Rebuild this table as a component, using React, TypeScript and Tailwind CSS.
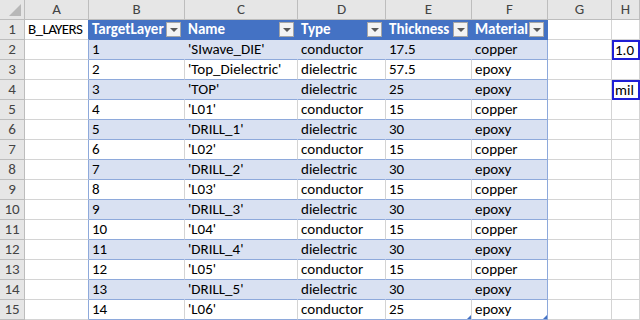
import React from "react";

const rows: [string, string, string, string, string][] = [
  ["1", "'SIwave_DIE'", "conductor", "17.5", "copper"],
  ["2", "'Top_Dielectric'", "dielectric", "57.5", "epoxy"],
  ["3", "'TOP'", "dielectric", "25", "epoxy"],
  ["4", "'L01'", "conductor", "15", "copper"],
  ["5", "'DRILL_1'", "dielectric", "30", "epoxy"],
  ["6", "'L02'", "conductor", "15", "copper"],
  ["7", "'DRILL_2'", "dielectric", "30", "epoxy"],
  ["8", "'L03'", "conductor", "15", "copper"],
  ["9", "'DRILL_3'", "dielectric", "30", "epoxy"],
  ["10", "'L04'", "conductor", "15", "copper"],
  ["11", "'DRILL_4'", "dielectric", "30", "epoxy"],
  ["12", "'L05'", "conductor", "15", "copper"],
  ["13", "'DRILL_5'", "dielectric", "30", "epoxy"],
  ["14", "'L06'", "conductor", "25", "epoxy"],
];

const headers = ["TargetLayer", "Name", "Type", "Thickness", "Material"];
const cols = ["A", "B", "C", "D", "E", "F", "G", "H"];

function Drop() {
  return (
    <div className="absolute right-[3px] top-[2px] w-[15px] h-[15px] bg-[#f3f3f3] border border-[#a6a6a6] flex items-center justify-center">
      <div className="w-0 h-0 border-l-[4px] border-r-[4px] border-t-[4px] border-l-transparent border-r-transparent border-t-[#595959]" />
    </div>
  );
}

export default function App() {
  const font = { fontFamily: "Carlito, Calibri, Lato, 'Liberation Sans', sans-serif" };
  return (
    <div
      className="w-[640px] h-[320px] overflow-hidden bg-white text-[15px] text-black relative"
      style={font}
    >
      <div className="grid grid-cols-[25px_64px_96px_113px_88px_86px_76px_64px_28px] grid-rows-[20px_repeat(15,20px)]">
        {/* corner */}
        <div className="relative bg-[#e6e6e6] border-r border-b border-[#bdbdbd]">
          <div className="absolute right-[3px] bottom-[3px] w-0 h-0 border-b-[12px] border-l-[12px] border-b-[#b8b8b8] border-l-transparent" />
        </div>
        {cols.map((c) => (
          <div
            key={c}
            className="bg-[#e6e6e6] border-r border-b border-[#bdbdbd] flex items-center justify-center text-[#444] leading-none"
          >
            {c}
          </div>
        ))}
        {/* row 1 */}
        <div className="bg-[#e6e6e6] border-r border-b border-[#bdbdbd] flex items-center justify-center text-[#444]">1</div>
        <div className="border-r border-b border-r-[#4472c4] border-b-[#d4d4d4] pl-[3px] flex items-center whitespace-nowrap overflow-hidden tracking-[-0.6px]">B_LAYERS</div>
        {headers.map((h) => (
          <div
            key={h}
            className="relative bg-[#4472c4] border-r border-b border-[#4472c4] pl-[3px] flex items-center text-white font-bold whitespace-nowrap overflow-hidden"
          >
            {h}
            <Drop />
          </div>
        ))}
        <div className="border-r border-b border-[#d4d4d4]" />
        <div className="border-r border-b border-[#d4d4d4]" />
        {rows.map((r, i) => {
          const band = i % 2 === 0;
          const rowNum = i + 2;
          const cellCls = band
            ? "bg-[#d9e1f2] border-r border-b border-r-[#d9e1f2] border-b-[#8ea9db]"
            : "bg-white border-r border-b border-r-[#d4d4d4] border-b-[#8ea9db]";
          const lastCls = band
            ? "bg-[#d9e1f2] border-r border-b border-r-[#8ea9db] border-b-[#8ea9db]"
            : "bg-white border-r border-b border-r-[#8ea9db] border-b-[#8ea9db]";
          const hText = rowNum === 2 ? "1.0" : rowNum === 4 ? "mil" : "";
          return (
            <React.Fragment key={i}>
              <div className="bg-[#e6e6e6] border-r border-b border-[#bdbdbd] flex items-center justify-center text-[#444]">
                {rowNum}
              </div>
              <div className="border-r border-b border-r-[#8ea9db] border-b-[#d4d4d4]" />
              {r.map((v, j) => (
                <div
                  key={j}
                  className={`${j === 4 ? lastCls : cellCls} pl-[3px] flex items-center whitespace-nowrap overflow-hidden relative`}
                >
                  {v}
                  {i === rows.length - 1 && (j === 3 || j === 4) && (
                    <div className="absolute right-0 bottom-0 w-0 h-0 border-b-[4px] border-l-[4px] border-b-[#4472c4] border-l-transparent" />
                  )}
                </div>
              ))}
              <div className="border-r border-b border-[#d4d4d4]" />
              {hText ? (
                <div className="border-2 border-[#1f1fd6] pl-[1px] flex items-center whitespace-nowrap overflow-hidden">
                  {hText}
                </div>
              ) : (
                <div className="border-r border-b border-[#d4d4d4]" />
              )}
            </React.Fragment>
          );
        })}
      </div>
    </div>
  );
}
